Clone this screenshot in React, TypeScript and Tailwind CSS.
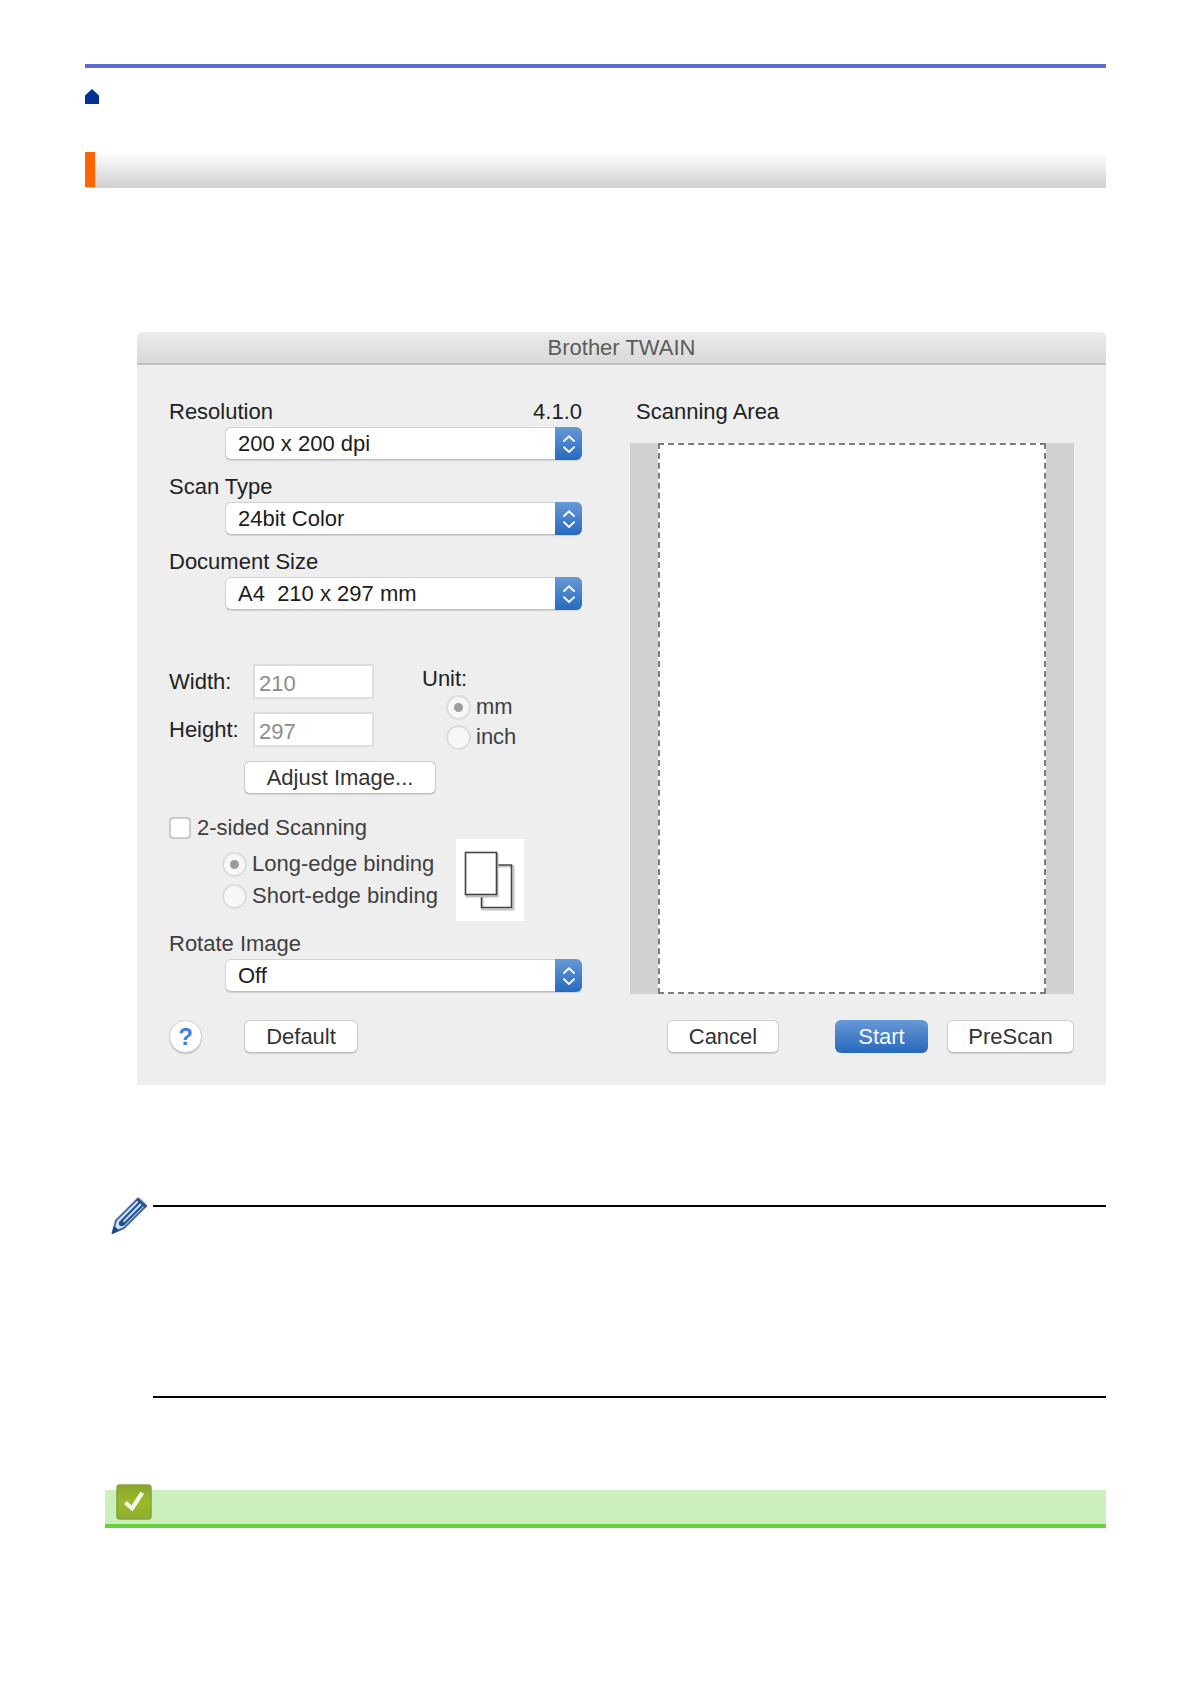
import React from "react";

const buttonClass =
  "h-[33px] shrink-0 rounded-md border border-[#cfcfcf] border-b-[#bcbcbc] bg-white text-[22px] leading-[30px] text-[#333333] shadow-[0_1px_1px_rgba(0,0,0,0.12)]";

function SelectField({ id, label, note, options, muted }: {
  id: string;
  label: string;
  note?: string;
  options: string[];
  muted?: boolean;
}) {
  return (
    <div>
      <div className="flex h-[30px] items-center justify-between">
        <label htmlFor={id} className={muted ? "text-[#404040]" : "text-[#222222]"}>{label}</label>
        {note && <span className="text-[#222222]">{note}</span>}
      </div>
      <div className="relative ml-14">
        <select
          id={id}
          className="block h-[33px] w-full appearance-none rounded-md border border-[#d2d2d2] border-b-[#bdbdbd] bg-white pr-8 pl-3 text-[22px] leading-[30px] text-[#1c1c1c] shadow-[0_1px_1px_rgba(0,0,0,0.12)]"
        >
          {options.map((o) => (
            <option key={o}>{o}</option>
          ))}
        </select>
        <span className="pointer-events-none absolute inset-y-0 right-0 flex w-[27px] items-center justify-center rounded-r-md bg-linear-to-b from-[#6699d6] to-[#256abf]">
          <svg width="14" height="20" viewBox="0 0 14 20" fill="none" stroke="#f2f7ff" strokeWidth="2" strokeLinecap="round" strokeLinejoin="round" aria-hidden="true">
            <path d="M2 7 L7 2.2 L12 7" />
            <path d="M2 13.2 L7 18 L12 13.2" />
          </svg>
        </span>
      </div>
    </div>
  );
}

function Radio({ name, label, checked, tall }: { name: string; label: string; checked?: boolean; tall?: boolean }) {
  return (
    <label className={tall ? "flex h-8 items-center gap-1 text-[#404040]" : "flex h-[30px] items-center gap-1 text-[#404040]"}>
      <input
        type="radio"
        name={name}
        defaultChecked={checked}
        disabled
        className="grid size-[25px] shrink-0 appearance-none place-content-center rounded-full border-2 border-[#dcdcdc] bg-[#f7f7f7] checked:before:block checked:before:size-[9px] checked:before:rounded-full checked:before:bg-[#9c9c9c] checked:before:content-['']"
      />
      <span className="pl-px whitespace-nowrap">{label}</span>
    </label>
  );
}

function SizeInput({ id, label, value }: { id: string; label: string; value: string }) {
  return (
    <div className="flex h-[35px] items-center">
      <label htmlFor={id} className="w-21 text-[#222222]">{label}</label>
      <input
        id={id}
        type="text"
        defaultValue={value}
        disabled
        className="h-[35px] w-[121px] border-2 border-[#dedede] bg-white pt-1 pl-1 text-[22px] text-[#8c8c8c]"
      />
    </div>
  );
}

function TwainDialog() {
  return (
    <section aria-label="Brother TWAIN" className="overflow-hidden rounded-t-md rounded-b-xs bg-[#eeeeee] text-[22px] leading-[30px]">
      <h2 className="flex h-[33px] items-center justify-center border-b-2 border-[#c0c0c0] bg-linear-to-b from-[#ebebeb] to-[#d9d9d9] text-[#5c5c5c]">
        Brother TWAIN
      </h2>
      <form className="grid grid-cols-[413fr_444fr] gap-12 p-8" onSubmit={(e) => e.preventDefault()}>
        <div>
          <div className="flex flex-col gap-3">
            <SelectField id="resolution" label="Resolution" note="4.1.0" options={["200 x 200 dpi"]} />
            <SelectField id="scan-type" label="Scan Type" options={["24bit Color"]} />
            <SelectField id="doc-size" label="Document Size" options={["A4\u00a0 210 x 297 mm"]} />
          </div>

          <div className="mt-[54px] flex h-[88px] gap-12">
            <div className="flex flex-col gap-[13px]">
              <SizeInput id="width" label="Width:" value="210" />
              <SizeInput id="height" label="Height:" value="297" />
            </div>
            <fieldset>
              <legend className="h-7 text-[#222222]">Unit:</legend>
              <div className="pl-6">
                <Radio name="unit" label="mm" checked />
                <Radio name="unit" label="inch" />
              </div>
            </fieldset>
          </div>

          <button type="button" className={`mt-[9px] ml-[75px] block w-48 ${buttonClass}`}>Adjust Image...</button>

          <label className="mt-[23px] flex h-[22px] w-fit items-center gap-1.5 text-[#404040]">
            <input
              type="checkbox"
              className="size-[22px] appearance-none rounded border-2 border-[#cccccc] bg-white checked:bg-[#3b7fd0]"
            />
            2-sided Scanning
          </label>
          <div className="flex items-center">
            <div role="radiogroup" aria-label="Binding" className="w-[287px] pl-[53px]">
              <Radio name="binding" label="Long-edge binding" checked tall />
              <Radio name="binding" label="Short-edge binding" tall />
            </div>
            <svg width="68" height="82" viewBox="0 0 68 82" className="shrink-0" aria-hidden="true">
              <rect width="68" height="82" fill="#ffffff" />
              <path d="M42 27.5 H57.5 V70.5 H26.5 V57" fill="none" stroke="#c4c4c4" strokeWidth="2" />
              <path d="M41 26 H55.5 V68.5 H25.5 V57" fill="none" stroke="#444444" strokeWidth="1.6" />
              <rect x="10.5" y="15" width="31" height="42.5" fill="none" stroke="#bdbdbd" strokeWidth="2" />
              <rect x="9.5" y="13.5" width="31" height="42" fill="#ffffff" stroke="#444444" strokeWidth="1.6" />
            </svg>
          </div>

          <div className="mt-2">
            <SelectField id="rotate" label="Rotate Image" options={["Off"]} muted />
          </div>

          <div className="mt-7 flex items-center gap-[42px]">
            <button
              type="button"
              aria-label="Help"
              className="flex size-[33px] items-center justify-center rounded-full border border-[#d2d2d2] bg-white text-2xl font-bold text-[#3d80dd] shadow-[0_1px_1px_rgba(0,0,0,0.2)]"
            >
              ?
            </button>
            <button type="button" className={`w-[114px] ${buttonClass}`}>Default</button>
          </div>
        </div>

        <div className="flex flex-col">
          <h3 className="pl-1.5 text-[#222222]">Scanning Area</h3>
          <div className="mt-4 flex flex-1 bg-[#d1d1d1] px-7">
            <div className="flex-1 border-2 border-dashed border-[#7d7d7d] bg-white" />
          </div>
          <div className="mt-[26px] flex justify-end">
            <button type="button" className={`mr-14 w-28 ${buttonClass}`}>Cancel</button>
            <button
              type="button"
              className="mr-[19px] h-[33px] w-[93px] rounded-md bg-linear-to-b from-[#6799d6] to-[#2568bd] text-[22px] leading-[30px] text-[#f4f8ff]"
            >
              Start
            </button>
            <button type="button" className={`w-[127px] ${buttonClass}`}>PreScan</button>
          </div>
        </div>
      </form>
    </section>
  );
}

function PencilIcon() {
  return (
    <svg width="37" height="38" viewBox="0 0 37 38" aria-hidden="true">
      <path d="M27 1 Q29 0 31 2 L35 6 Q37 8 35 10 L13 31 L1 37 L5 24 Z" fill="#c3d9ef" />
      <path d="M27 1.5 L5 23.5 L1.5 36 L13 31 L35 9 Z" fill="#d5e5f5" stroke="#4a6c9f" strokeWidth="2" strokeLinejoin="round" />
      <path d="M29 5 L9 25.500 M32 8 L12 28" stroke="#28579a" strokeWidth="2.400" />
      <path d="M26 2 L35 10" stroke="#2f5286" strokeWidth="2.600" />
      <circle cx="10.500" cy="26.500" r="2.600" fill="#1c4f96" />
      <path d="M3 29 L8 33 L1 37 Z" fill="#174a86" />
    </svg>
  );
}

function CheckBadge() {
  return (
    <svg width="36" height="36" viewBox="0 0 36 36" aria-hidden="true">
      <defs>
        <linearGradient id="badge" x1="0" y1="0" x2="0" y2="1">
          <stop offset="0" stopColor="#87a62c" />
          <stop offset="0.5" stopColor="#9bb92a" />
          <stop offset="1" stopColor="#8fae2c" />
        </linearGradient>
      </defs>
      <rect x="1" y="1" width="34" height="34" rx="3" fill="url(#badge)" stroke="#86a043" strokeWidth="1.500" />
      <path d="M8 20 L11 17 L15.500 21.500 L24.500 7.500 L28 10 L16.500 27.500 Z" fill="#f7faf2" />
    </svg>
  );
}

export default function App() {
  return (
    <div className="min-h-screen bg-white px-[85px] pt-16 font-['Liberation_Sans',Arial,sans-serif]">
      <header>
        <div className="h-1 bg-[#5c6bd4]" />
        <a href="#home" aria-label="Home" className="mt-[21px] block w-fit">
          <svg width="14" height="15" viewBox="0 0 14 15" aria-hidden="true">
            <path d="M7 0 L14 6.500 V15 H0 V6.500 Z" fill="#003296" />
          </svg>
        </a>
        <div className="mt-12 flex h-9 bg-linear-to-b from-white to-[#d0d0d0]">
          <div className="h-[35px] w-2.5 bg-[#ff6400]" />
        </div>
      </header>

      <main>
        <div className="mt-36 ml-[52px]">
          <TwainDialog />
        </div>

        <div className="mt-28 ml-[26px] flex items-start gap-[5px]">
          <PencilIcon />
          <div className="mt-2 h-[193px] flex-1 border-y-2 border-black" />
        </div>

        <div className="mt-[86px] ml-5 flex">
          <div className="mt-1.5 flex h-[38px] flex-1 items-start border-b-4 border-[#66d23c] bg-[#cbefbd] pl-[11px]">
            <div className="-mt-1.5">
              <CheckBadge />
            </div>
          </div>
        </div>
      </main>
    </div>
  );
}
